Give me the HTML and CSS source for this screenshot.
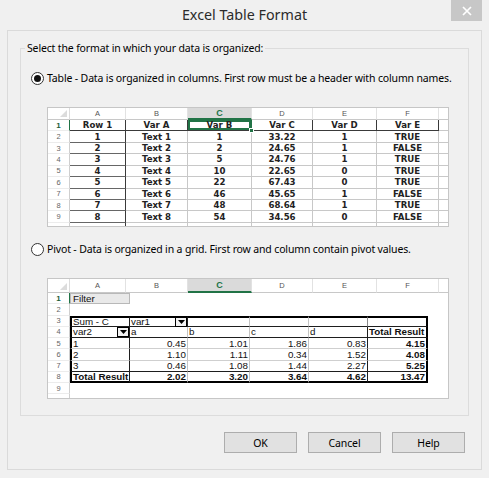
FILE: index.html
```html
<!DOCTYPE html>
<html>
<head>
<meta charset="utf-8">
<link rel="stylesheet" href="styles.css">
</head>
<body>
<div class="window">
  <div class="titlebar">
    <div class="title">Excel Table Format</div>
    <div class="close"><svg width="10" height="10" viewBox="0 0 10 10"><path d="M1 1L9 9M9 1L1 9" stroke="#fff" stroke-width="1.7" fill="none"/></svg></div>
  </div>
  <div class="frame">
    <fieldset class="group">
      <legend>Select the format in which your data is organized:</legend>
      <div class="option first"><span class="radio checked"></span><span>Table - Data is organized in columns. First row must be a header with column names.</span></div>
      <div class="sheet sheet-table">
        <div class="grid t1">
          <div class="corner"><span class="tri"></span></div><div class="ch">A</div><div class="ch">B</div><div class="ch sel">C</div><div class="ch">D</div><div class="ch">E</div><div class="ch">F</div><div class="ch"></div>

          <div class="rh sel">1</div><div class="c hd">Row 1</div><div class="c hd">Var A</div><div class="c hd active">Var B</div><div class="c hd">Var C</div><div class="c hd">Var D</div><div class="c hd">Var E</div><div class="c"></div>

          <div class="rh">2</div><div class="c ka">1</div><div class="c">Text 1</div><div class="c">1</div><div class="c">33.22</div><div class="c">1</div><div class="c">TRUE</div><div class="c"></div>
          <div class="rh">3</div><div class="c ka">2</div><div class="c">Text 2</div><div class="c">2</div><div class="c">24.65</div><div class="c">1</div><div class="c">FALSE</div><div class="c"></div>
          <div class="rh">4</div><div class="c ka">3</div><div class="c">Text 3</div><div class="c">5</div><div class="c">24.76</div><div class="c">1</div><div class="c">TRUE</div><div class="c"></div>
          <div class="rh">5</div><div class="c ka">4</div><div class="c">Text 4</div><div class="c">10</div><div class="c">22.65</div><div class="c">0</div><div class="c">TRUE</div><div class="c"></div>
          <div class="rh">6</div><div class="c ka">5</div><div class="c">Text 5</div><div class="c">22</div><div class="c">67.43</div><div class="c">0</div><div class="c">TRUE</div><div class="c"></div>
          <div class="rh">7</div><div class="c ka">6</div><div class="c">Text 6</div><div class="c">46</div><div class="c">45.65</div><div class="c">1</div><div class="c">FALSE</div><div class="c"></div>
          <div class="rh">8</div><div class="c ka">7</div><div class="c">Text 7</div><div class="c">48</div><div class="c">68.64</div><div class="c">1</div><div class="c">TRUE</div><div class="c"></div>
          <div class="rh">9</div><div class="c ka">8</div><div class="c">Text 8</div><div class="c">54</div><div class="c">34.56</div><div class="c">0</div><div class="c">FALSE</div><div class="c"></div>
          <div class="rh"></div><div class="c ka"></div><div class="c"></div><div class="c"></div><div class="c"></div><div class="c"></div><div class="c"></div><div class="c"></div>
        </div>
      </div>
      <div class="option second"><span class="radio"></span><span>Pivot - Data is organized in a grid. First row and column contain pivot values.</span></div>
      <div class="sheet sheet-pivot">
        <div class="grid phead">
          <div class="corner"><span class="tri"></span></div><div class="ch">A</div><div class="ch">B</div><div class="ch sel">C</div><div class="ch">D</div><div class="ch">E</div><div class="ch">F</div><div class="ch"></div>
        </div>
        <div class="grid pbody">
          <div class="rh sel">1</div><div class="c filter">Filter</div><div class="c"></div><div class="c"></div><div class="c"></div><div class="c"></div><div class="c"></div><div class="c"></div>
          <div class="rh">2</div><div class="c"></div><div class="c"></div><div class="c"></div><div class="c"></div><div class="c"></div><div class="c"></div><div class="c"></div>

          <div class="rh">3</div><div class="c T2 L2 rd bd">Sum - C</div><div class="c T2 rd bd">var1<span class="dd"><svg width="7" height="4" viewBox="0 0 7 4"><path d="M0 0H7L3.5 4Z" fill="#000"/></svg></span></div><div class="c T2 rl bd"></div><div class="c T2 rl bd"></div><div class="c T2 rg bd"></div><div class="c T2 R2 bd"></div><div class="c"></div>

          <div class="rh">4</div><div class="c L2 rd bd">var2<span class="dd"><svg width="7" height="4" viewBox="0 0 7 4"><path d="M0 0H7L3.5 4Z" fill="#000"/></svg></span></div><div class="c rl bd">a</div><div class="c rl bd">b</div><div class="c rl bd">c</div><div class="c rd bd">d</div><div class="c R2 bd b">Total Result</div><div class="c"></div>

          <div class="rh">5</div><div class="c L2 rd bl">1</div><div class="c rl bl num">0.45</div><div class="c rl bl num">1.01</div><div class="c rl bl num">1.86</div><div class="c rd bl num">0.83</div><div class="c R2 bl num b">4.15</div><div class="c"></div>
          <div class="rh">6</div><div class="c L2 rd bl">2</div><div class="c rl bl num">1.10</div><div class="c rl bl num">1.11</div><div class="c rl bl num">0.34</div><div class="c rd bl num">1.52</div><div class="c R2 bl num b">4.08</div><div class="c"></div>
          <div class="rh">7</div><div class="c L2 rd bd">3</div><div class="c rl bd num">0.46</div><div class="c rl bd num">1.08</div><div class="c rl bd num">1.44</div><div class="c rd bd num">2.27</div><div class="c R2 bd num b">5.25</div><div class="c"></div>
          <div class="rh">8</div><div class="c L2 rd B2 b">Total Result</div><div class="c rl B2 num b">2.02</div><div class="c rl B2 num b">3.20</div><div class="c rl B2 num b">3.64</div><div class="c rd B2 num b">4.62</div><div class="c R2 B2 num b">13.47</div><div class="c"></div>

          <div class="rh">9</div><div class="c"></div><div class="c"></div><div class="c"></div><div class="c"></div><div class="c"></div><div class="c"></div><div class="c"></div>
          <div class="rh"></div><div class="c"></div><div class="c"></div><div class="c"></div><div class="c"></div><div class="c"></div><div class="c"></div><div class="c"></div>
        </div>
      </div>
    </fieldset>
    <div class="buttons">
      <button class="btn">OK</button>
      <button class="btn">Cancel</button>
      <button class="btn">Help</button>
    </div>
  </div>
</div>
</body>
</html>
```
FILE: styles.css
```css
html, body {
  margin: 0;
  padding: 0;
}
body {
  background: #f0f0f0;
  font-family: "Noto Sans", "Open Sans", sans-serif;
  font-size: 10.5px;
  letter-spacing: -0.15px;
  color: #000;
}
.window {
  width: 489px;
  height: 478px;
  display: flex;
  flex-direction: column;
  box-sizing: border-box;
}
.titlebar {
  height: 30px;
  display: flex;
  align-items: flex-start;
  flex: none;
}
.title {
  flex: 1;
  padding-left: 38px;
  text-align: center;
  font-size: 14.3px;
  letter-spacing: 0;
  line-height: 30px;
  color: #2b2b2b;
}
.close {
  width: 31px;
  height: 21px;
  margin-right: 7px;
  background: #c7c7c7;
  display: flex;
  align-items: center;
  justify-content: center;
}
.frame {
  flex: 1;
  margin: 0 7px 8px;
  border: 1px solid #dadada;
  padding: 9px 12px 16px;
  display: flex;
  flex-direction: column;
  min-height: 0;
}
.group {
  margin: 0;
  border: 1px solid #dcdcdc;
  padding: 0 0 16px 0;
  min-width: 0;
}
.group legend {
  margin-left: 4px;
  padding: 0 2px;
  line-height: 16px;
}
.option {
  display: flex;
  align-items: center;
  height: 16px;
  padding-left: 10px;
  gap: 3px;
  white-space: nowrap;
}
.option.first { margin-top: 14px; }
.option.second { margin-top: 14px; }
.radio {
  width: 13px;
  height: 13px;
  border-radius: 50%;
  border: 1px solid #333;
  background: #fff;
  box-sizing: border-box;
  display: flex;
  align-items: center;
  justify-content: center;
  flex: none;
}
.radio.checked::before {
  content: "";
  width: 7px;
  height: 7px;
  border-radius: 50%;
  background: #111;
}
.sheet {
  margin-left: 26px;
  margin-top: 21px;
  width: 402px;
  border: 1px solid #c6c6c6;
  box-sizing: border-box;
  background: #fff;
  overflow: hidden;
  letter-spacing: 0;
}
.sheet-table { height: 120px; }
.sheet-pivot { height: 121px; }
.grid {
  display: grid;
}
.grid > div {
  box-sizing: border-box;
  display: flex;
  align-items: center;
  white-space: nowrap;
  min-width: 0;
}
.t1 {
  grid-template-columns: 22px 56px 62px 64px 61px 64px 62px 40px;
  grid-template-rows: 12px repeat(10, 11.43px);
}
.phead {
  grid-template-columns: 22px 56px 62px 64px 61px 64px 62px 40px;
  grid-template-rows: 14px;
}
.pbody {
  grid-template-columns: 22px 60px 58px 62px 59px 59px 60px 40px;
  grid-template-rows: repeat(10, 11.25px);
}
.corner {
  background: #fff;
  border-right: 1px solid #dcdcdc;
  border-bottom: 1px solid #c8c8c8;
  justify-content: flex-end;
  align-items: flex-end !important;
  padding: 0 2px 2px 0;
}
.tri {
  width: 7px;
  height: 7px;
  background: #dcdcdc;
  clip-path: polygon(100% 0, 100% 100%, 0 100%);
}
.ch {
  justify-content: center;
  font-family: "Liberation Sans", Arial, sans-serif;
  font-size: 7.5px;
  color: #555;
  background: #fff;
  border-right: 1px solid #e2e2e2;
  border-bottom: 1px solid #c8c8c8;
}
.ch.sel {
  background: #dadada;
  color: #217346;
  font-weight: bold;
  font-size: 9px;
  border-bottom: 2px solid #217346;
}
.rh {
  justify-content: center;
  font-family: "Liberation Sans", Arial, sans-serif;
  font-size: 7.5px;
  color: #666;
  background: #fff;
  border-right: 1px solid #cfcfcf;
  border-bottom: 1px solid #ececec;
}
.rh.sel {
  color: #1d5c38;
  font-weight: bold;
  font-size: 8px;
  border-right: 1px solid #217346;
}
.t1 .c {
  justify-content: center;
  font-family: "DejaVu Sans", sans-serif;
  font-weight: bold;
  font-size: 8.6px;
  color: #222;
  border-right: 1px solid #c8c8c8;
  border-bottom: 1px solid #c8c8c8;
}
.t1 .c.hd {
  border-right-color: #3a3a3a;
  border-bottom-color: #3a3a3a;
}
.t1 .c.ka {
  border-right-color: #3a3a3a;
  border-bottom-color: #666;
}
.t1 .c.active {
  position: relative;
  z-index: 2;
  box-shadow: inset 0 0 0 2px #217346;
  border-right-color: #217346;
}
.t1 .c.active::after {
  content: "";
  position: absolute;
  right: -3px;
  bottom: -3px;
  width: 5px;
  height: 5px;
  background: #217346;
  border: 1px solid #fff;
  box-sizing: border-box;
}
.pbody .c {
  font-family: "Liberation Sans", Arial, sans-serif;
  font-size: 9.8px;
  color: #111;
  padding: 0 1px;
}
.pbody .c.filter {
  background: #e9e9e9;
  border: 1px solid #b8b8b8;
  padding-left: 2px;
}
.pbody .c.num { justify-content: flex-end; }
.pbody .c.b { font-weight: bold; }
.T2 { border-top: 2px solid #000; }
.L2 { border-left: 2px solid #000; }
.R2 { border-right: 2px solid #000; }
.B2 { border-bottom: 2px solid #000; }
.rd { border-right: 1px solid #1e1e1e; }
.rg { border-right: 1px solid #8a8a8a; }
.rl { border-right: 1px solid #c4c4c4; }
.bd { border-bottom: 1px solid #1e1e1e; }
.bl { border-bottom: 1px solid #cfcfcf; }
.dd {
  margin-left: auto;
  width: 12px;
  height: 10px;
  border: 1px solid #000;
  background: #f2f2f2;
  box-sizing: border-box;
  display: flex;
  align-items: center;
  justify-content: center;
  margin-right: -1px;
}
.buttons {
  display: flex;
  justify-content: flex-end;
  gap: 11px;
  margin-top: 16px;
  padding-right: 4px;
}
.btn {
  width: 73px;
  height: 21px;
  margin: 0;
  padding: 0;
  border: 1px solid #adadad;
  background: #e1e1e1;
  font-family: "Noto Sans", "Open Sans", sans-serif;
  font-size: 10.5px;
  letter-spacing: -0.1px;
  color: #000;
  border-radius: 0;
}
```
